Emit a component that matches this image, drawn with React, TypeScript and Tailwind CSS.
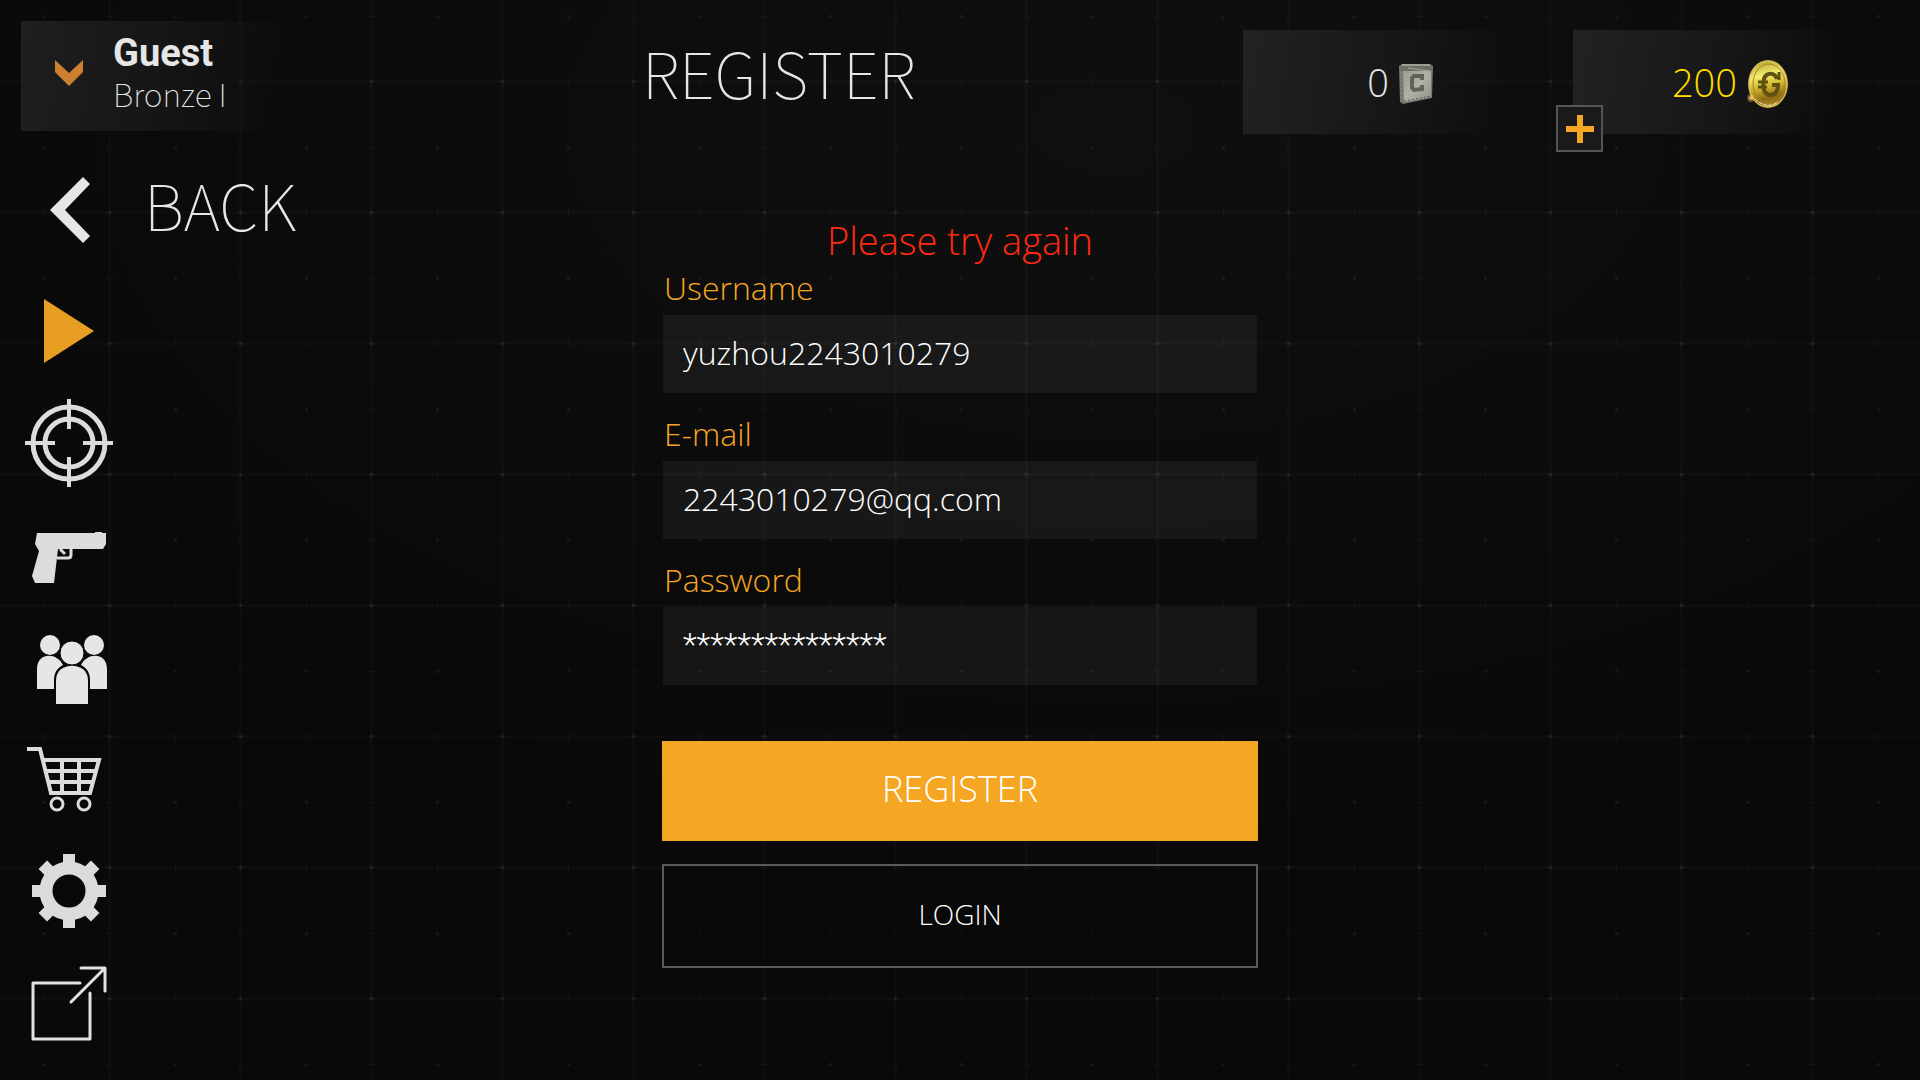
import { useState } from "react";
import type { ReactNode } from "react";

const THIN = "font-['Noto_Sans_CJK_SC',sans-serif] font-thin";
const LIGHT = "font-['Open_Sans',sans-serif] font-light";
const BOOK = "font-['Open_Sans',sans-serif] font-[340]";

function Backdrop() {
  return (
    <svg className="pointer-events-none absolute inset-0 h-full w-full" aria-hidden="true">
      <defs>
        <radialGradient id="glow" cx="58%" cy="12%" r="65%">
          <stop offset="0" stopColor="#0f0f0f" />
          <stop offset="0.5" stopColor="#0c0c0c" />
          <stop offset="1" stopColor="#090909" />
        </radialGradient>
        <pattern id="grid" width="131" height="131" patternUnits="userSpaceOnUse">
          <g fill="#ffffff">
            <rect x="108" y="0" width="3" height="131" opacity="0.017" />
            <rect x="0" y="80" width="131" height="3" opacity="0.017" />
            <rect x="108" y="80" width="3" height="3" opacity="0.04" />
            <rect x="109" y="78" width="1" height="7" opacity="0.03" />
            <rect x="106" y="81" width="7" height="1" opacity="0.03" />
            <rect x="43" y="15" width="3" height="3" opacity="0.05" />
            <rect x="44" y="78" width="1" height="7" opacity="0.04" />
            <rect x="106" y="16" width="7" height="1" opacity="0.03" />
          </g>
        </pattern>
      </defs>
      <rect width="100%" height="100%" fill="url(#glow)" />
      <rect width="100%" height="100%" fill="url(#grid)" />
    </svg>
  );
}

function CreditIcon() {
  return (
    <svg className="mt-1" width="34" height="40" viewBox="0 0 34 40" aria-hidden="true">
      <defs>
        <linearGradient id="plate" x1="0" y1="0" x2="1" y2="1">
          <stop offset="0" stopColor="#9d9c95" />
          <stop offset="0.5" stopColor="#b0b0a6" />
          <stop offset="1" stopColor="#8f8f86" />
        </linearGradient>
      </defs>
      <path d="M0 2 L3 0 H31 L34 2 L33 34 L4 40 L1 38 Z" fill="#77776f" />
      <path d="M4 7 L32 7 L32 33 L5 38 Z" fill="url(#plate)" />
      <path d="M1 2 L3 1 H32 L33 6 L2 7 Z" fill="#6e6e68" />
      <path d="M3 1 H31" stroke="#c9c9c2" strokeWidth="1" />
      <path d="M9 4 L31 7" stroke="#a5a59d" strokeWidth="1" />
      <path d="M5 37 L32 32" stroke="#5a5a54" strokeWidth="1" strokeDasharray="2 2" />
      <path d="M2 8 V37" stroke="#8d8d86" strokeWidth="1" strokeDasharray="2 2" />
      <path d="M23 16 V12 H15 L13 14 V24 L15 26 L23 25 V21" fill="none" stroke="#62625b" strokeWidth="4" />
    </svg>
  );
}

function CoinIcon() {
  return (
    <svg className="mt-1" width="42" height="50" viewBox="0 0 42 50" aria-hidden="true">
      <defs>
        <linearGradient id="coin" x1="0.4" y1="0" x2="0.6" y2="1">
          <stop offset="0" stopColor="#b9a832" />
          <stop offset="0.3" stopColor="#f4ec6c" />
          <stop offset="0.55" stopColor="#cfb32c" />
          <stop offset="0.8" stopColor="#8a6a14" />
          <stop offset="1" stopColor="#b8902c" />
        </linearGradient>
        <radialGradient id="spark">
          <stop offset="0" stopColor="#ffe28a" />
          <stop offset="1" stopColor="#ffb028" stopOpacity="0" />
        </radialGradient>
      </defs>
      <ellipse cx="21" cy="25" rx="20" ry="24" fill="#b98c2a" />
      <ellipse cx="21" cy="25" rx="19" ry="23" fill="url(#coin)" stroke="#dccb74" strokeWidth="1" />
      <ellipse cx="22" cy="25" rx="16" ry="20" fill="none" stroke="#a5872a" strokeWidth="1" />
      <path d="M8 40 Q20 51 31 43" fill="none" stroke="#f7efc8" strokeWidth="1" strokeDasharray="4 1" />
      <path d="M30 20 C28 13 19 13 17 20 C15 30 18 36 23 36 C28 36 31 33 31 26 H25" fill="none" stroke="#5f5210" strokeWidth="4" />
      <path d="M32 13 V21" stroke="#5f5210" strokeWidth="3" />
      <path d="M11 23 H21 M11 28 H20" stroke="#5f5210" strokeWidth="3" />
      <circle cx="4" cy="39" r="5" fill="url(#spark)" />
    </svg>
  );
}

function Balance({ label, amount, tone, inset, children }: { label: string; amount: string; tone: string; inset: string; children: ReactNode }) {
  return (
    <div
      aria-label={label}
      className={`flex h-[104px] w-[260px] items-center justify-end gap-[10px] bg-linear-100 from-[#222222] via-[#171717] via-55% to-transparent ${inset}`}
    >
      <span className={`${LIGHT} text-[38px] leading-12 ${tone}`}>{amount}</span>
      {children}
    </div>
  );
}

const cogTeeth = [0, 45, 90, 135, 180, 225, 270, 315];

const menu: { name: string; icon: ReactNode }[] = [
  { name: "Play", icon: <path d="M31 24 L81 56 L31 88 Z" fill="#e89e22" /> },
  {
    name: "Missions",
    icon: (
      <g fill="none" stroke="#dcdcdc">
        <circle cx="56" cy="56" r="36" strokeWidth="5" />
        <circle cx="56" cy="56" r="24" strokeWidth="5" />
        <path d="M56 12 V42 M56 70 V100 M12 56 H42 M70 56 H100" strokeWidth="4" />
      </g>
    ),
  },
  {
    name: "Weapons",
    icon: (
      <g fill="#dcdcdc">
        <path d="M24 34 H82 V33 H89 V34 H93 V45 L90 50 H45 L41 84 H22 L19 77 L26 52 L22 45 Z" />
        <path d="M58 49 V56 Q58 59 55 59 H44" fill="none" stroke="#dcdcdc" strokeWidth="3" />
        <path d="M47 50 L52 55" stroke="#dcdcdc" strokeWidth="3" />
      </g>
    ),
  },
  {
    name: "Friends",
    icon: (
      <g fill="#e6e6e6">
        <circle cx="37" cy="34" r="10" />
        <circle cx="81" cy="34" r="10" />
        <path d="M24 78 V58 C24 41 44 41 50 54 C44 57 41 62 41 69 V78 Z" />
        <path d="M94 78 V58 C94 41 74 41 68 54 C74 57 77 62 77 69 V78 Z" />
        <circle cx="59" cy="42" r="12" stroke="#080808" strokeWidth="1" />
        <path d="M43 93 V69 C43 50 75 50 75 69 V93 Z" />
      </g>
    ),
  },
  {
    name: "Shop",
    icon: (
      <g fill="none" stroke="#dcdcdc" strokeWidth="4">
        <path d="M14 26 H27 L38 70 H77 L86 37 H30" />
        <path d="M33 48 H83 M36 59 H80" />
        <path d="M49 37 V70 M66 37 V70" />
        <circle cx="44" cy="81" r="6" strokeWidth="3" />
        <circle cx="71" cy="81" r="6" strokeWidth="3" />
      </g>
    ),
  },
  {
    name: "Settings",
    icon: (
      <g fill="#dadcdb">
        {cogTeeth.map((a) => (
          <rect key={a} x="50" y="19" width="12" height="14" transform={`rotate(${a} 56 56)`} />
        ))}
        <circle cx="56" cy="56" r="23" fill="none" stroke="#dadcdb" strokeWidth="13" />
      </g>
    ),
  },
  {
    name: "Exit",
    icon: (
      <g fill="none" stroke="#e2e2e2" strokeWidth="3" strokeLinecap="round" strokeLinejoin="round">
        <path d="M67 36 H20 V92 H77 V46" />
        <path d="M68 21 H92 V44 M92 21 L58 55" />
      </g>
    ),
  },
];

function Field({ id, label, value, masked = false, onChange }: { id: string; label: string; value: string; masked?: boolean; onChange: (v: string) => void }) {
  const face = masked ? "font-['Roboto',sans-serif] font-light" : BOOK;
  return (
    <div className="flex flex-col gap-[7px]">
      <label htmlFor={id} className={`${LIGHT} pl-[2px] text-[32px] leading-10 text-[#f5a623]`}>
        {label}
      </label>
      <input
        id={id}
        type="text"
        autoComplete="off"
        value={value}
        onChange={(e) => onChange(e.target.value)}
        className={`${face} mx-px h-[78px] bg-white/5 px-5 pb-1 text-[32px] text-white outline-none`}
      />
    </div>
  );
}

export default function App() {
  const [username, setUsername] = useState("yuzhou2243010279");
  const [email, setEmail] = useState("2243010279@qq.com");
  const [password, setPassword] = useState("***************");

  return (
    <div className="relative isolate min-h-screen overflow-hidden bg-[#0a0a0a] text-[#e6e6e6]">
      <Backdrop />
      <div className="relative flex flex-col">
        <header className="flex h-[154px] items-start">
          <div className="w-1/3 pt-[21px] pl-[21px]">
            <button className="flex h-[110px] w-[290px] items-start bg-linear-100 from-[#1f1f1f] via-[#151515] via-50% to-transparent to-90% pt-3 pl-[34px] text-left">
              <svg className="mt-[27px] shrink-0" width="28" height="26" viewBox="0 0 28 26" aria-hidden="true">
                <path d="M0 0 L14 13 L28 0 V12 L14 26 L0 12 Z" fill="#cd7f32" />
              </svg>
              <span className="flex flex-col pl-[30px]">
                <span className="font-['Roboto',sans-serif] text-[38px] leading-10 font-bold">Guest</span>
                <span className={`${THIN} text-[32px] leading-10`}>Bronze I</span>
              </span>
            </button>
          </div>
          <h1 className={`${THIN} flex-1 pt-8 pl-[2px] text-[63px] leading-20`}>REGISTER</h1>
          <div className="flex shrink-0 gap-[70px] pt-[30px] pr-[87px]">
            <Balance label="Credits" amount="0" tone="text-[#e6e6e6]" inset="pr-[70px]">
              <CreditIcon />
            </Balance>
            <div className="relative">
              <Balance label="Gold" amount="200" tone="text-[#ffdd00]" inset="pr-[44px]">
                <CoinIcon />
              </Balance>
              <button
                aria-label="Add gold"
                className="absolute top-[75px] -left-[17px] flex size-[47px] items-center justify-center border-2 border-[#555555] bg-[#1a1a1a]"
              >
                <svg width="28" height="28" viewBox="0 0 28 28" aria-hidden="true">
                  <path d="M11 0 H17 V11 H28 V17 H17 V28 H11 V17 H0 V11 H11 Z" fill="#f5a623" />
                </svg>
              </button>
            </div>
          </div>
        </header>

        <div className="grid grid-cols-[1fr_596px_1fr]">
          <aside>
            <button className="flex h-[100px] items-center pl-[50px]">
              <svg className="mt-3" width="40" height="66" viewBox="0 0 40 66" aria-hidden="true">
                <path d="M33 0 L40 7 L15 33 L40 59 L33 66 L0 33 Z" fill="#e6e6e6" />
              </svg>
              <span className={`${THIN} pl-[54px] text-[63px] leading-20`}>BACK</span>
            </button>
            <nav className="mt-[21px] flex flex-col items-start pl-[13px]">
              {menu.map((m) => (
                <button key={m.name} aria-label={m.name} className="size-28">
                  <svg viewBox="0 0 112 112" className="size-28" aria-hidden="true">
                    {m.icon}
                  </svg>
                </button>
              ))}
            </nav>
          </aside>

          <form className="flex flex-col pt-[62px]" onSubmit={(e) => e.preventDefault()}>
            <p role="alert" className={`${LIGHT} text-center text-[38px] leading-12 text-[#ff2a12]`}>
              Please try again
            </p>
            <div className="mt-1 flex flex-col gap-[21px]">
              <Field id="username" label="Username" value={username} onChange={setUsername} />
              <Field id="email" label="E-mail" value={email} onChange={setEmail} />
              <Field id="password" label="Password" masked value={password} onChange={setPassword} />
            </div>
            <button type="submit" className={`${BOOK} mt-14 h-[100px] bg-[#f5a623] pb-1 text-[36px] text-white`}>
              REGISTER
            </button>
            <button type="button" className={`${BOOK} mt-[23px] h-[104px] border-2 border-[#5a5a5a] bg-[#0a0a0a]/60 pb-1 text-[28px] text-white`}>
              LOGIN
            </button>
          </form>
        </div>
      </div>
    </div>
  );
}
